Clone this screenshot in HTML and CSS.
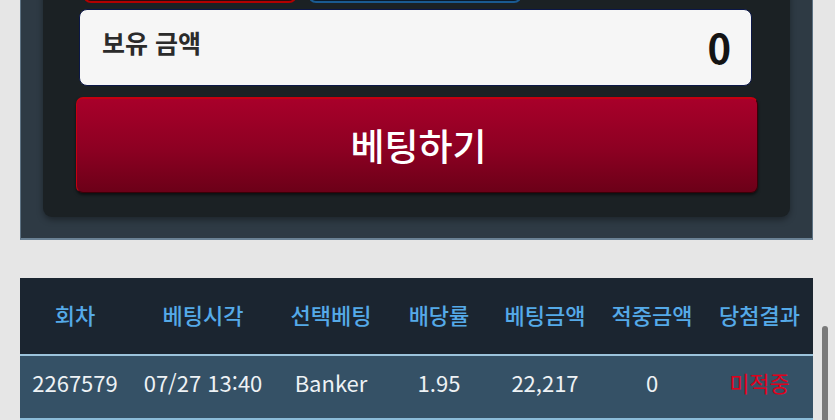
FILE: index.html
```html
<!DOCTYPE html>
<html lang="ko">
<head>
<meta charset="utf-8">
<link rel="stylesheet" href="styles.css">
</head>
<body>
<div class="page">
  <section class="panel">
    <div class="card">
      <div class="pick-row">
        <button class="pick pick-red"></button>
        <button class="pick pick-blue"></button>
      </div>
      <div class="balance">
        <span class="balance-label">보유 금액</span>
        <span class="balance-value">0</span>
      </div>
      <button class="bet-btn">베팅하기</button>
    </div>
  </section>

  <table class="history">
    <colgroup>
      <col class="c1"><col class="c2"><col class="c3"><col class="c4"><col class="c5"><col class="c6"><col class="c7">
    </colgroup>
    <thead>
      <tr>
        <th>회차</th><th>베팅시각</th><th>선택베팅</th><th>배당률</th><th>베팅금액</th><th>적중금액</th><th>당첨결과</th>
      </tr>
    </thead>
    <tbody>
      <tr>
        <td>2267579</td><td>07/27 13:40</td><td>Banker</td><td>1.95</td><td>22,217</td><td>0</td><td class="lose">미적중</td>
      </tr>
    </tbody>
  </table>
</div>
<div class="scrollbar"></div>
</body>
</html>
```

FILE: styles.css
```css
html, body {
  margin: 0;
  padding: 0;
  background: #e6e6e6;
  overflow: hidden;
  font-family: "Noto Sans CJK KR", "Noto Sans", sans-serif;
}

.page {
  padding: 0 22px 0 20px;
}

.panel {
  background: #2e3a44;
  border-left: 1px solid #5d7283;
  border-right: 1px solid #5d7283;
  border-bottom: 2px solid #6a8194;
  padding: 0 22px 21px 22px;
}

.card {
  background: #1b2124;
  border-radius: 0 0 9px 9px;
  box-shadow: 0 3px 6px rgba(0, 0, 0, 0.35);
  padding: 0 32px 24px 33px;
}

.pick-row {
  display: flex;
  gap: 11px;
  margin: -37px 0 6px 7px;
}

.pick {
  width: 214px;
  height: 40px;
  border-radius: 8px;
  padding: 0;
}

.pick-red {
  background: #2a0a0e;
  border: 2px solid #b30000;
}

.pick-blue {
  background: #0a1a2a;
  border: 2px solid #1a5a90;
}

.balance {
  margin: 0 6px 0 3px;
  height: 77px;
  box-sizing: border-box;
  background: #f6f6f6;
  border: 1px solid #0b1748;
  border-radius: 8px;
  display: flex;
  align-items: center;
  justify-content: space-between;
  padding: 0 20px 0 22px;
}

.balance-label {
  font-size: 25px;
  font-weight: 700;
  color: #2b2b2b;
  margin-top: -12px;
}

.balance-value {
  font-size: 40px;
  font-weight: 700;
  color: #141414;
  margin-top: -2px;
}

.bet-btn {
  display: block;
  width: 100%;
  margin-top: 11px;
  height: 96px;
  border-radius: 7px;
  border: 1px solid #3a0008;
  border-top: 2px solid #c40010;
  border-left: 1px solid #c40010;
  background: linear-gradient(to bottom, #a8002a 0%, #8c0022 55%, #6c0018 100%);
  box-shadow: 0 2px 3px rgba(0, 0, 0, 0.55);
  color: #ffffff;
  font-family: "Noto Sans CJK KR", "Noto Sans", sans-serif;
  font-size: 37px;
  font-weight: 500;
  padding: 0 0 2px 3px;
}

.history {
  margin-top: 38px;
  width: 793px;
  border-collapse: collapse;
  table-layout: fixed;
}

.c1 { width: 110px; }
.c2 { width: 146px; }
.c3 { width: 110px; }
.c4 { width: 106px; }
.c5 { width: 106px; }
.c6 { width: 108px; }
.c7 { width: 107px; }

.history th {
  background: #1b2530;
  color: #55aae8;
  font-size: 22px;
  font-weight: 500;
  height: 72px;
  padding: 0 0 4px 0;
  border-bottom: 2px solid #9cc4dc;
  white-space: nowrap;
}

.history td {
  background: #355166;
  color: #eef2f5;
  font-size: 22px;
  font-weight: 400;
  height: 52px;
  text-align: center;
  padding: 0 0 10px 0;
  border-bottom: 2px solid #8bbcd9;
  white-space: nowrap;
}

.history td.lose {
  color: #e0001c;
}

.scrollbar {
  position: fixed;
  left: 822px;
  top: 326px;
  width: 6px;
  height: 110px;
  border-radius: 3px;
  background: #7a7a7a;
}
```
